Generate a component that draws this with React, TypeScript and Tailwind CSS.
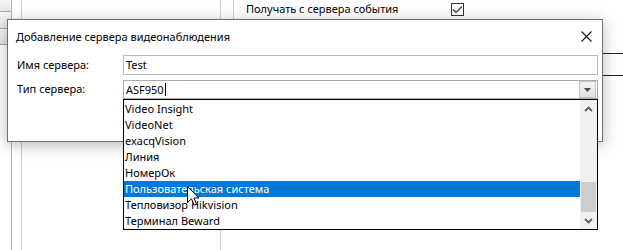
import { useState } from 'react';

const SERVER_TYPES = [
  'Video Insight',
  'VideoNet',
  'exacqVision',
  'Линия',
  'НомерОк',
  'Пользовательская система',
  'Тепловизор Hikvision',
  'Терминал Beward',
];

function Chevron({ up }: { up?: boolean }) {
  return (
    <svg width="9" height="6" viewBox="0 0 9 6" className="text-[#606060]">
      <path
        d={up ? 'M1 5 L4.5 1.5 L8 5' : 'M1 1 L4.5 4.5 L8 1'}
        fill="none"
        stroke="currentColor"
        strokeWidth="1.8"
      />
    </svg>
  );
}

function Cursor() {
  return (
    <svg width="13" height="21" viewBox="0 0 13 21" className="pointer-events-none absolute left-[187px] top-[186px]">
      <path
        d="M0.5 0.5 L0.5 16.5 L4.5 12.8 L7.2 19.2 L9.5 18.2 L6.9 12 L11.8 12 Z"
        fill="#fff"
        stroke="#000"
        strokeWidth="1"
        strokeLinejoin="miter"
      />
    </svg>
  );
}

export default function App() {
  const [selected] = useState(5);

  return (
    <div className="relative h-[250px] w-[623px] overflow-hidden bg-white font-['Noto_Sans',sans-serif] text-[11px] leading-none text-black">
      {/* window behind the dialog */}
      <div className="flex h-full">
        <div className="flex w-[12px] flex-col border-r border-[#b4b4b4]">
          <div className="h-[12px] border-b border-[#a8a8a8] bg-gradient-to-b from-[#f6f6f6] to-[#e6e6e6]" />
          <div className="h-[17px] border-b border-[#a8a8a8] bg-gradient-to-b from-[#f6f6f6] to-[#e6e6e6]" />
          <div className="h-[16px] border-b border-[#a8a8a8] bg-gradient-to-b from-[#f6f6f6] to-[#e6e6e6]" />
          <div className="flex-1" />
        </div>
        <div className="w-[10px] border-r border-[#cfcfcf]" />
        <div className="w-[199px] border-r border-[#cfcfcf]" />
        <div className="h-[20px] w-[13px] border-r border-[#cfcfcf]" />
        <div className="flex flex-1 flex-col">
          <div className="flex h-[22px] items-start pt-[3px]">
            <span className="ml-[12px] w-[205px]">Получать с сервера события</span>
            <span className="flex h-[13px] w-[13px] items-center justify-center border border-[#333]">
              <svg width="11" height="9" viewBox="0 0 11 9">
                <path d="M1 4.5 L4 7.5 L10 1.5" fill="none" stroke="#333" strokeWidth="1.2" />
              </svg>
            </span>
          </div>
          <div className="mt-[31px] border-t border-[#222]" />
          <div className="mt-[21px] border-t border-[#222]" />
        </div>
      </div>

      {/* dialog */}
      <div className="absolute left-[7px] top-[19px] h-[123px] w-[596px] border border-[#6f6f6f] bg-white shadow-[0_3px_14px_rgba(0,0,0,0.28)]">
        <div className="flex h-[35px] items-center justify-between pl-[8px] pr-[10px] pb-[2px]">
          <span>Добавление сервера видеонаблюдения</span>
          <svg width="11" height="11" viewBox="0 0 11 11">
            <path d="M0.5 0.5 L10.5 10.5 M10.5 0.5 L0.5 10.5" stroke="#111" strokeWidth="1.1" />
          </svg>
        </div>
        <div className="flex flex-col gap-[5px] pl-[9px]">
          <div className="flex items-center">
            <span className="w-[106px] pb-[2px]">Имя сервера:</span>
            <div className="flex h-[20px] w-[475px] items-center border border-[#b9b9b9] px-[2px] pb-[1px]">Test</div>
          </div>
          <div className="flex items-center">
            <span className="w-[106px] pb-[2px]">Тип сервера:</span>
            <div className="flex h-[19px] w-[475px] items-center border border-[#acacac] pl-[2px]">
              <span className="pb-[1px]">ASF950</span>
              <span className="ml-[1px] h-[13px] w-px bg-black" />
              <span className="ml-auto mr-[1px] flex h-[17px] w-[17px] items-center justify-center border border-[#c4c4c4] bg-gradient-to-b from-[#f2f2f2] to-[#e3e3e3]">
                <svg width="7" height="4" viewBox="0 0 7 4">
                  <path d="M0 0 L7 0 L3.5 4 Z" fill="#4a4a4a" />
                </svg>
              </span>
            </div>
          </div>
        </div>
      </div>

      {/* open list of the combo box */}
      <div className="absolute left-[123px] top-[99px] flex h-[131px] w-[475px] border border-black bg-white">
        <ul className="flex-1 pt-[1px]">
          {SERVER_TYPES.map((item, i) => (
            <li
              key={item}
              className={
                i === selected
                  ? 'flex h-[16px] items-center bg-[#0078d7] pb-[1px] pl-[1px] text-white'
                  : 'flex h-[16px] items-center pb-[1px] pl-[1px]'
              }
            >
              {item}
            </li>
          ))}
        </ul>
        <div className="flex w-[17px] flex-col bg-[#f0f0f0]">
          <div className="flex h-[17px] items-center justify-center">
            <Chevron up />
          </div>
          <div className="flex-1 pt-[65px]">
            <div className="mx-[1px] h-[30px] bg-[#cdcdcd]" />
          </div>
          <div className="flex h-[17px] items-center justify-center">
            <Chevron />
          </div>
        </div>
      </div>

      <Cursor />
    </div>
  );
}
